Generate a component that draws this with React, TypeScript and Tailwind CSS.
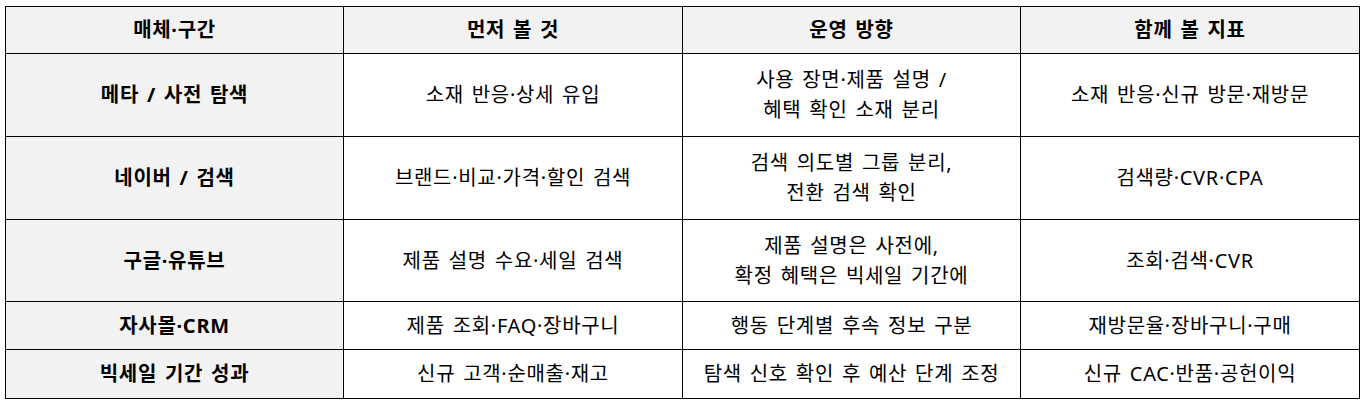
import React from "react";

const header = ["매체·구간", "먼저 볼 것", "운영 방향", "함께 볼 지표"];

const rows: { h: string; cells: string[][] }[] = [
  {
    h: "h-[82px]",
    cells: [
      ["메타 / 사전 탐색"],
      ["소재 반응·상세 유입"],
      ["사용 장면·제품 설명 /", "혜택 확인 소재 분리"],
      ["소재 반응·신규 방문·재방문"],
    ],
  },
  {
    h: "h-[82px]",
    cells: [
      ["네이버 / 검색"],
      ["브랜드·비교·가격·할인 검색"],
      ["검색 의도별 그룹 분리,", "전환 검색 확인"],
      ["검색량·CVR·CPA"],
    ],
  },
  {
    h: "h-[81px]",
    cells: [
      ["구글·유튜브"],
      ["제품 설명 수요·세일 검색"],
      ["제품 설명은 사전에,", "확정 혜택은 빅세일 기간에"],
      ["조회·검색·CVR"],
    ],
  },
  {
    h: "h-[47px]",
    cells: [
      ["자사몰·CRM"],
      ["제품 조회·FAQ·장바구니"],
      ["행동 단계별 후속 정보 구분"],
      ["재방문율·장바구니·구매"],
    ],
  },
  {
    h: "h-[48px]",
    cells: [
      ["빅세일 기간 성과"],
      ["신규 고객·순매출·재고"],
      ["탐색 신호 확인 후 예산 단계 조정"],
      ["신규 CAC·반품·공헌이익"],
    ],
  },
];

export default function App() {
  return (
    <div
      className="w-[1363px] h-[403px] bg-white pt-[6px] pl-[5px] text-black"
      style={{ fontFamily: '"Noto Sans", "Noto Sans CJK KR", sans-serif' }}
    >
      <div className="grid w-[1355px] grid-cols-[337px_338px_337px_338px] gap-px bg-black p-px text-[20px] leading-[30px] tracking-[0.7px] [word-spacing:2px]">
        {header.map((t) => (
          <div
            key={t}
            className="flex h-[46px] items-center justify-center bg-[#f2f2f2] font-bold"
          >
            {t}
          </div>
        ))}
        {rows.map((r, ri) =>
          r.cells.map((lines, ci) => (
            <div
              key={`${ri}-${ci}`}
              className={`flex ${r.h} flex-col items-center justify-center text-center ${
                ci === 0 ? "bg-[#f2f2f2] font-bold" : "bg-white"
              }`}
            >
              {lines.map((l) => (
                <div key={l}>{l}</div>
              ))}
            </div>
          ))
        )}
      </div>
    </div>
  );
}
